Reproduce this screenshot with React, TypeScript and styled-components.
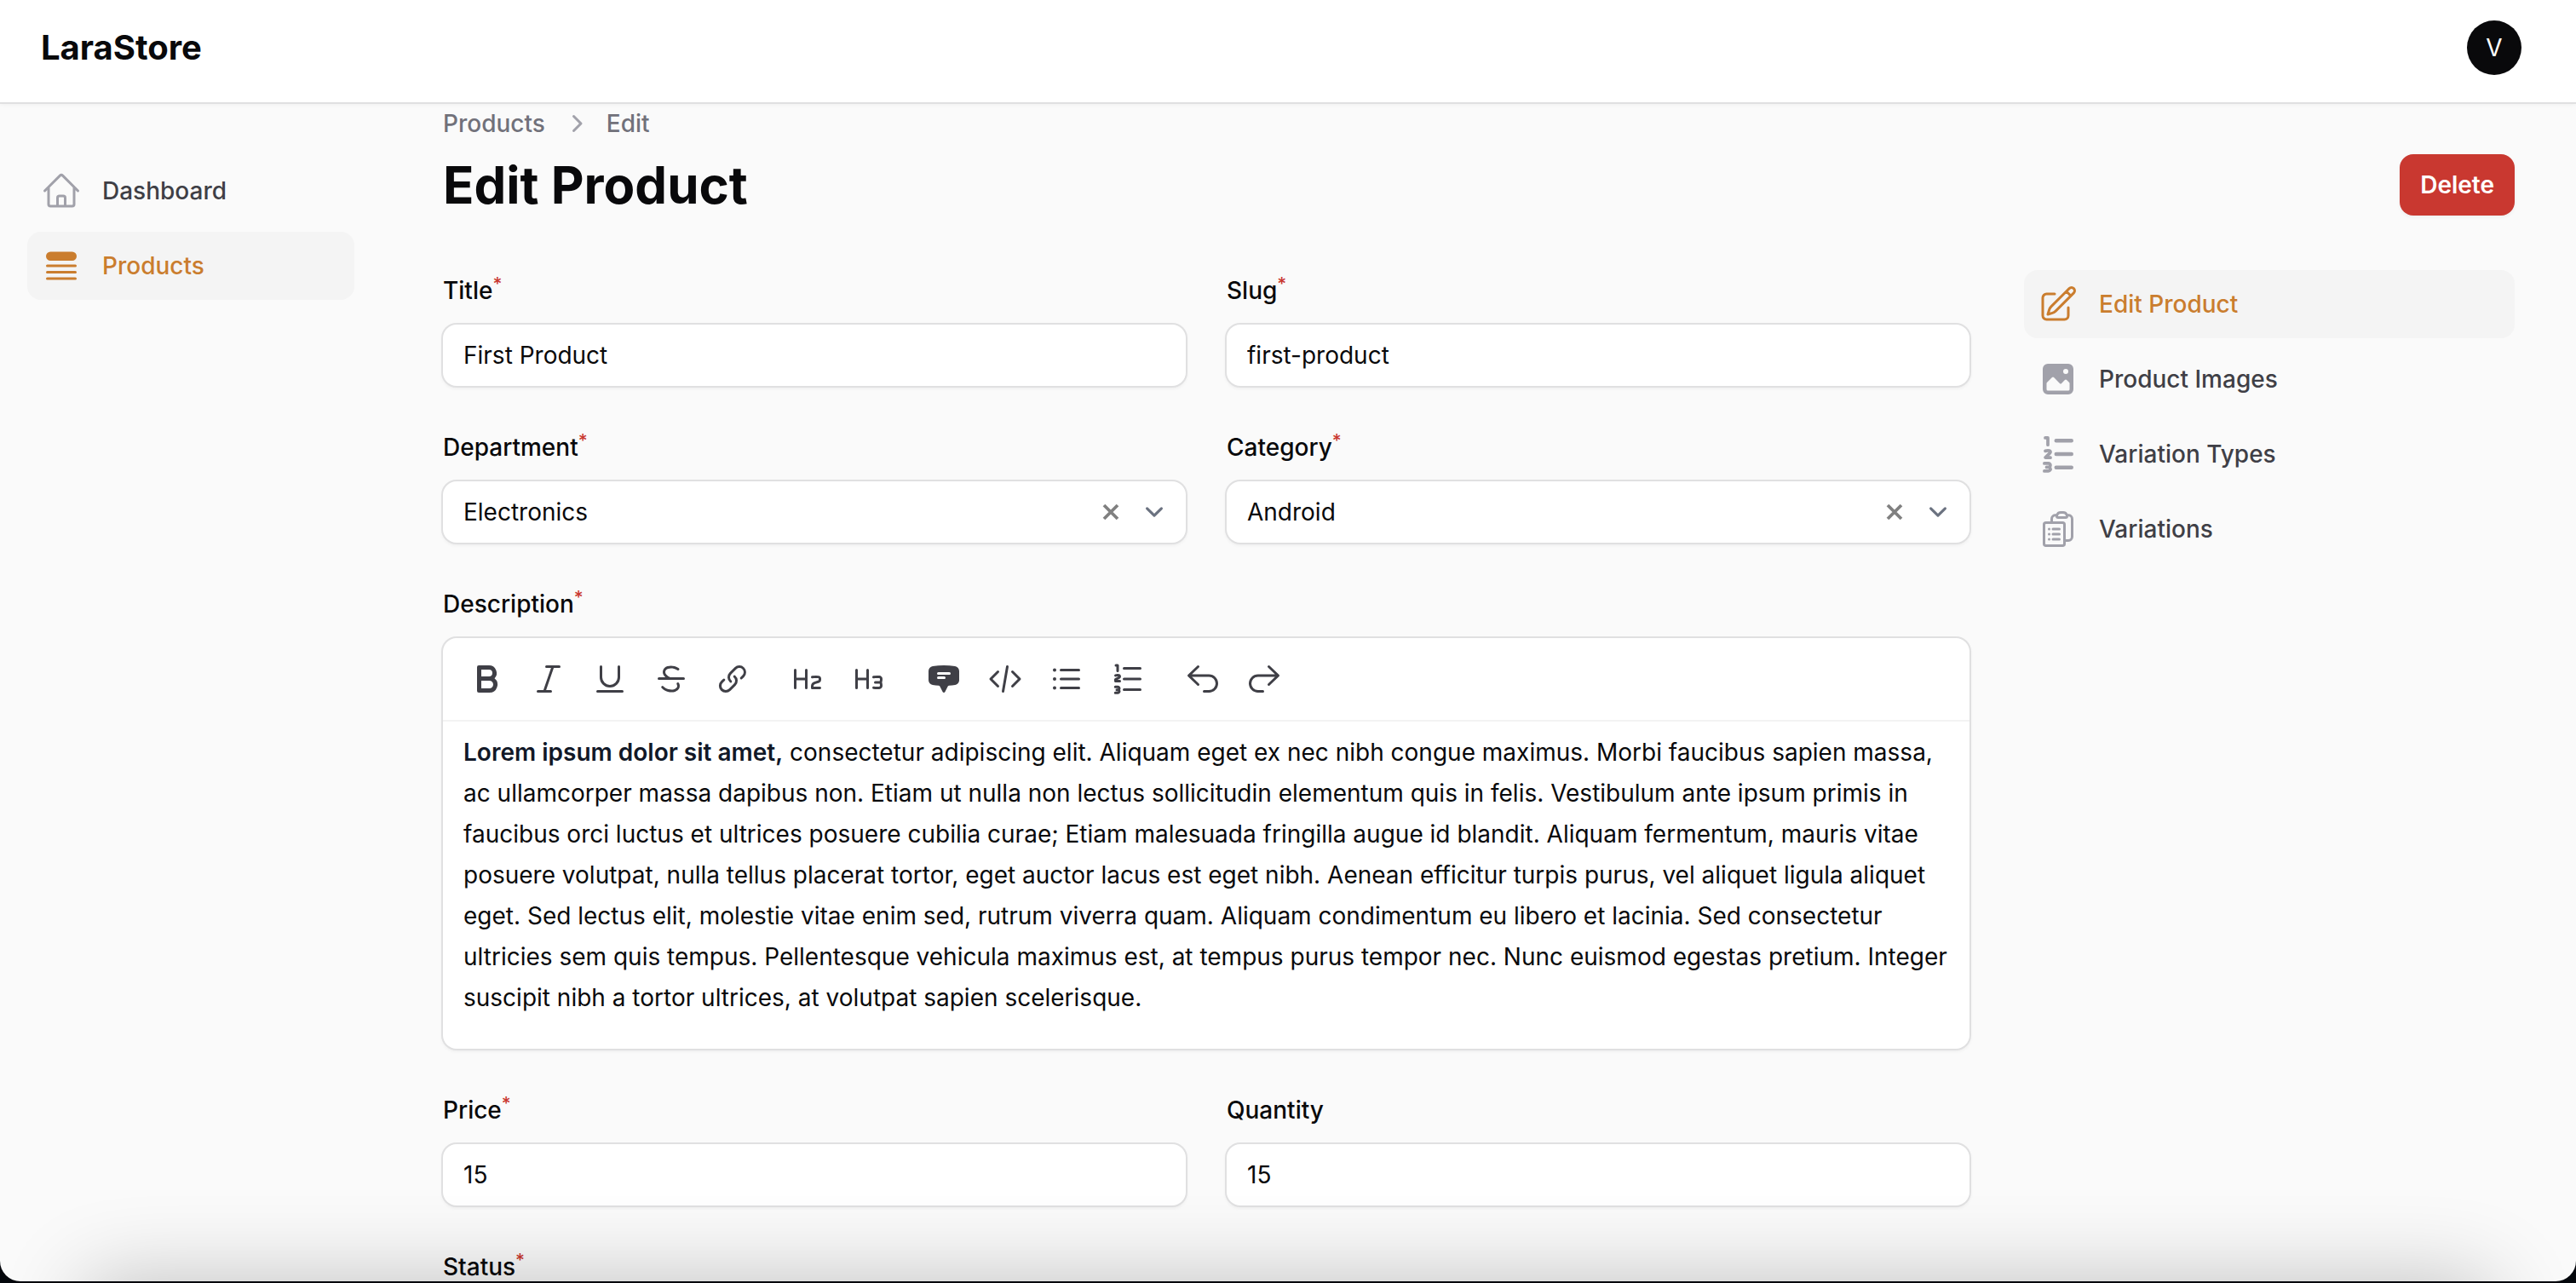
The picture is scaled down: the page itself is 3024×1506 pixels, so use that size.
import React from "react";
import styled, { createGlobalStyle, css } from "styled-components";
import {
  HiOutlineHome,
  HiQueueList,
  HiOutlinePencilSquare,
  HiOutlineClipboardDocumentList,
  HiMiniLink,
  HiMiniCodeBracket,
  HiMiniListBullet,
  HiMiniArrowUturnLeft,
  HiMiniArrowUturnRight,
  HiMiniChatBubbleBottomCenterText,
  HiMiniChevronRight,
} from "react-icons/hi2";

const color = {
  page: "#fafafa",
  surface: "#ffffff",
  ring: "#e0e0e1",
  active: "#f4f4f4",
  ink: "#09090b",
  text: "#3f3f46",
  muted: "#71717a",
  icon: "#a1a1aa",
  primary: "#ca7d2e",
  danger: "#c93830",
};

const GlobalStyle = createGlobalStyle`
  *, *::before, *::after { box-sizing: border-box; }
  body {
    margin: 0;
    background: #04070c;
    color: ${color.ink};
    font-family: Inter, "Liberation Sans", sans-serif;
    font-size: 28px;
    line-height: 40px;
    font-optical-sizing: none;
    -webkit-font-smoothing: antialiased;
  }
  button, input, select { font: inherit; color: inherit; }
  a { color: inherit; text-decoration: none; }
`;

/* ---------- icons ---------- */

const Glyph = ({ size, box, d }: { size: number; box: number; d: string }) => (
  <svg width={size} height={size} viewBox={`0 0 ${box} ${box}`} fill="currentColor" aria-hidden="true">
    <path fillRule="evenodd" clipRule="evenodd" d={d} />
  </svg>
);

const paths = {
  photo:
    "M2 4a2 2 0 0 1 2-2h8a2 2 0 0 1 2 2v8a2 2 0 0 1-2 2H4a2 2 0 0 1-2-2V4Zm10.5 5.707a.5.5 0 0 0-.146-.353l-1-1a.5.5 0 0 0-.708 0L9.354 9.646a.5.5 0 0 1-.708 0L6.354 7.354a.5.5 0 0 0-.708 0l-2 2a.5.5 0 0 0-.146.353V12a.5.5 0 0 0 .5.5h8a.5.5 0 0 0 .5-.5V9.707ZM12 5a1 1 0 1 1-2 0 1 1 0 0 1 2 0Z",
  numberedSmall:
    "M2.995 1a.625.625 0 1 0 0 1.25h.38v2.125a.625.625 0 1 0 1.25 0v-2.75A.625.625 0 0 0 4 1H2.995ZM3.208 7.385a2.37 2.37 0 0 1 1.027-.124L2.573 8.923a.625.625 0 0 0 .439 1.067l1.987.011a.625.625 0 0 0 .006-1.25l-.49-.003.777-.776c.215-.215.335-.506.335-.809 0-.465-.297-.957-.842-1.078a3.636 3.636 0 0 0-1.993.121.625.625 0 1 0 .416 1.179ZM2.625 11a.625.625 0 1 0 0 1.25H4.25a.125.125 0 0 1 0 .25H3.5a.625.625 0 1 0 0 1.25h.75a.125.125 0 0 1 0 .25H2.625a.625.625 0 1 0 0 1.25H4.25a1.375 1.375 0 0 0 1.153-2.125A1.375 1.375 0 0 0 4.25 11H2.625ZM7.25 2a.75.75 0 0 0 0 1.5h6a.75.75 0 0 0 0-1.5h-6ZM7.25 7.25a.75.75 0 0 0 0 1.5h6a.75.75 0 0 0 0-1.5h-6ZM6.5 13.25a.75.75 0 0 1 .75-.75h6a.75.75 0 0 1 0 1.5h-6a.75.75 0 0 1-.75-.75Z",
  bold: "M4 3a1 1 0 0 1 1-1h6a4.5 4.5 0 0 1 3.274 7.587A4.75 4.75 0 0 1 11.25 18H5a1 1 0 0 1-1-1V3Zm2.5 5.5v-4H11a2 2 0 1 1 0 4H6.5Zm0 2.5v4.5h4.75a2.25 2.25 0 0 0 0-4.5H6.5Z",
  italic:
    "M8 2.75A.75.75 0 0 1 8.75 2h7.5a.75.75 0 0 1 0 1.5h-3.215l-4.483 13h2.698a.75.75 0 0 1 0 1.5h-7.5a.75.75 0 0 1 0-1.5h3.215l4.483-13H8.75A.75.75 0 0 1 8 2.75Z",
  underline:
    "M4.75 2a.75.75 0 0 1 .75.75V9a4.5 4.5 0 1 0 9 0V2.75a.75.75 0 0 1 1.5 0V9A6 6 0 0 1 4 9V2.75A.75.75 0 0 1 4.75 2ZM2 17.25a.75.75 0 0 1 .75-.75h14.5a.75.75 0 0 1 0 1.5H2.75a.75.75 0 0 1-.75-.75Z",
  strike:
    "M11.617 3.963c-1.186-.318-2.418-.323-3.416.015-.992.336-1.49.91-1.642 1.476-.152.566-.007 1.313.684 2.1.528.6 1.273 1.1 2.128 1.446h7.879a.75.75 0 0 1 0 1.5H2.75a.75.75 0 0 1 0-1.5h3.813a5.976 5.976 0 0 1-.447-.456C5.18 7.479 4.798 6.231 5.11 5.066c.312-1.164 1.268-2.055 2.61-2.509 1.336-.451 2.877-.42 4.286-.043.856.23 1.684.592 2.409 1.074a.75.75 0 1 1-.83 1.25 6.723 6.723 0 0 0-1.968-.875Zm1.909 8.123a.75.75 0 0 1 1.015.309c.53.99.607 2.062.18 3.01-.421.94-1.289 1.648-2.441 2.038-1.336.452-2.877.42-4.286.043-1.409-.377-2.759-1.121-3.69-2.18a.75.75 0 1 1 1.127-.99c.696.791 1.765 1.403 2.952 1.721 1.186.318 2.418.323 3.416-.015.853-.288 1.34-.756 1.555-1.232.21-.467.205-1.049-.136-1.69a.75.75 0 0 1 .308-1.014Z",
  heading2:
    "M2.75 4a.75.75 0 0 1 .75.75v4.5h5v-4.5a.75.75 0 0 1 1.5 0v10.5a.75.75 0 0 1-1.5 0v-4.5h-5v4.5a.75.75 0 0 1-1.5 0V4.75A.75.75 0 0 1 2.75 4ZM15 9.5c-.729 0-1.445.051-2.146.15a.75.75 0 0 1-.208-1.486 16.887 16.887 0 0 1 3.824-.1c.855.074 1.512.78 1.527 1.637a17.476 17.476 0 0 1-.009.931 1.713 1.713 0 0 1-1.18 1.556l-2.453.818a1.25 1.25 0 0 0-.855 1.185v.309h3.75a.75.75 0 0 1 0 1.5h-4.5a.75.75 0 0 1-.75-.75v-1.059a2.75 2.75 0 0 1 1.88-2.608l2.454-.818c.102-.034.153-.117.155-.188a15.556 15.556 0 0 0 .009-.85.171.171 0 0 0-.158-.169A15.458 15.458 0 0 0 15 9.5Z",
  heading3:
    "M2.75 4a.75.75 0 0 1 .75.75v4.5h5v-4.5a.75.75 0 0 1 1.5 0v10.5a.75.75 0 0 1-1.5 0v-4.5h-5v4.5a.75.75 0 0 1-1.5 0V4.75A.75.75 0 0 1 2.75 4ZM15 9.5c-.73 0-1.448.051-2.15.15a.75.75 0 1 1-.209-1.485 16.886 16.886 0 0 1 3.476-.128c.985.065 1.878.837 1.883 1.932V10a6.75 6.75 0 0 1-.301 2A6.75 6.75 0 0 1 18 14v.031c-.005 1.095-.898 1.867-1.883 1.932a17.018 17.018 0 0 1-3.467-.127.75.75 0 0 1 .209-1.485 15.377 15.377 0 0 0 3.16.115c.308-.02.48-.24.48-.441L16.5 14c0-.431-.052-.85-.15-1.25h-2.6a.75.75 0 0 1 0-1.5h2.6c.098-.4.15-.818.15-1.25v-.024c-.001-.201-.173-.422-.481-.443A15.485 15.485 0 0 0 15 9.5Z",
  numbered:
    "M3 1.25a.75.75 0 0 0 0 1.5h.25v2.5a.75.75 0 0 0 1.5 0V2A.75.75 0 0 0 4 1.25H3ZM2.97 8.654a3.5 3.5 0 0 1 1.524-.12.034.034 0 0 1-.012.012L2.415 9.579A.75.75 0 0 0 2 10.25v1c0 .414.336.75.75.75h2.5a.75.75 0 0 0 0-1.5H3.927l1.225-.613c.52-.26.848-.79.848-1.371 0-.647-.429-1.327-1.193-1.451a5.03 5.03 0 0 0-2.277.155.75.75 0 0 0 .44 1.434ZM7.75 3a.75.75 0 0 0 0 1.5h9.5a.75.75 0 0 0 0-1.5h-9.5ZM7.75 9.25a.75.75 0 0 0 0 1.5h9.5a.75.75 0 0 0 0-1.5h-9.5ZM7.75 15.5a.75.75 0 0 0 0 1.5h9.5a.75.75 0 0 0 0-1.5h-9.5ZM2.625 13.875a.75.75 0 0 0 0 1.5h1.5a.125.125 0 0 1 0 .25H3.5a.75.75 0 0 0 0 1.5h.625a.125.125 0 0 1 0 .25h-1.5a.75.75 0 0 0 0 1.5h1.5a1.625 1.625 0 0 0 1.37-2.5 1.625 1.625 0 0 0-1.37-2.5h-1.5Z",
};

const CrossIcon = () => (
  <svg width="20" height="20" viewBox="0 0 20 20" fill="none" stroke="currentColor" strokeWidth="3.8" aria-hidden="true">
    <path d="M2 2l16 16M18 2L2 18" />
  </svg>
);

const ChevronDownIcon = () => (
  <svg width="42" height="42" viewBox="0 0 20 20" fill="none" stroke="currentColor" strokeWidth="1.5" strokeLinecap="round" strokeLinejoin="round" aria-hidden="true">
    <path d="m6 8 4 4 4-4" />
  </svg>
);

/* ---------- frame ---------- */

const Window = styled.div`
  position: relative;
  display: flex;
  flex-direction: column;
  height: calc(100vh - 2px);
  overflow: hidden;
  border-radius: 0 0 24px 24px;
  background: ${color.page};
`;

const BottomShade = styled.div`
  position: absolute;
  top: 100%;
  left: 100px;
  right: 100px;
  height: 200px;
  box-shadow: 0 0 100px rgba(0, 0, 0, 0.24);
  pointer-events: none;
`;

const TopBar = styled.header`
  flex: none;
  display: flex;
  align-items: center;
  justify-content: space-between;
  padding: 24px 64px 32px 48px;
  background: ${color.surface};
  box-shadow: 0 0 0 2px ${color.ring}, 0 2px 6px rgba(0, 0, 0, 0.06);
  z-index: 1;
`;

const Brand = styled.a`
  font-size: 40px;
  line-height: 40px;
  font-weight: 700;
`;

const Avatar = styled.button`
  width: 64px;
  height: 64px;
  padding: 0;
  border: 0;
  border-radius: 50%;
  background: ${color.ink};
  color: #fff;
`;

const Body = styled.div`
  flex: 1;
  min-height: 0;
  display: grid;
  grid-template-columns: 448px minmax(0, 1fr);
  overflow-y: auto;
  scrollbar-width: none;
`;

/* ---------- navigation ---------- */

const NavList = styled.nav`
  display: flex;
  flex-direction: column;
  gap: 8px;
`;

const Sidebar = styled(NavList)`
  padding: 64px 32px;
`;

const SubNav = styled(NavList)`
  flex: none;
  width: 576px;
`;

const NavLink = styled.a<{ $active?: boolean }>`
  display: flex;
  align-items: center;
  gap: 24px;
  padding: 16px;
  border-radius: 16px;
  font-weight: 500;
  color: ${color.text};

  svg {
    flex: none;
    width: 48px;
    height: 48px;
    color: ${color.icon};
  }

  ${(p) =>
    p.$active &&
    css`
      background: ${color.active};
      color: ${color.primary};
      svg { color: ${color.primary}; }
    `}
`;

/* ---------- page ---------- */

const Main = styled.main`
  width: 100%;
  max-width: 2560px;
  margin: 0 auto;
  padding: 5px 64px 0;
  display: flex;
  flex-direction: column;
  gap: 64px;
`;

const PageHeader = styled.header`
  display: flex;
  align-items: flex-end;
  justify-content: space-between;
`;

const PageIntro = styled.div`
  display: flex;
  flex-direction: column;
  gap: 16px;
`;

const Breadcrumbs = styled.nav`
  display: flex;
  align-items: center;
  gap: 16px;
  font-weight: 500;
  color: ${color.muted};

  svg {
    width: 40px;
    height: 40px;
    color: ${color.icon};
  }
`;

const PageTitle = styled.h1`
  margin: 0;
  font-size: 60px;
  line-height: 72px;
  font-weight: 700;
`;

const DeleteButton = styled.button`
  padding: 16px 24px;
  border: 0;
  border-radius: 16px;
  background: ${color.danger};
  color: #fff;
  font-weight: 600;
  box-shadow: 0 2px 4px rgba(0, 0, 0, 0.05);
`;

const Columns = styled.div`
  display: flex;
  align-items: flex-start;
  gap: 64px;
`;

const Form = styled.form`
  flex: 1;
  min-width: 0;
  display: grid;
  grid-template-columns: repeat(2, minmax(0, 1fr));
  gap: 48px;
`;

const FieldBox = styled.div<{ $wide?: boolean }>`
  display: flex;
  flex-direction: column;
  align-items: stretch;
  gap: 16px;
  grid-column: ${(p) => (p.$wide ? "1 / -1" : "auto")};
`;

const labelText = css`
  font-weight: 500;
  line-height: 48px;
`;

const Label = styled.label`
  ${labelText}
`;

const LabelText = styled.span`
  ${labelText}
`;

const Required = styled.sup`
  font-size: 21px;
  line-height: 0;
  color: ${color.danger};
`;

const Control = styled.div`
  display: flex;
  align-items: center;
  border-radius: 16px;
  background: ${color.surface};
  box-shadow: 0 0 0 2px ${color.ring}, 0 2px 4px 1px rgba(0, 0, 0, 0.06);
`;

const fieldInput = css`
  flex: 1;
  min-width: 0;
  height: 72px;
  margin: 0;
  padding: 12px 24px;
  border: 0;
  outline: 0;
  background: transparent;
  line-height: 48px;
  appearance: none;
`;

const Input = styled.input`
  ${fieldInput}
`;

const Select = styled.select`
  ${fieldInput}
`;

const SelectTools = styled.div`
  display: flex;
  align-items: center;
  gap: 20px;
  padding-right: 16px;
  color: #6b7280;
`;

const ClearButton = styled.button`
  display: flex;
  padding: 0;
  border: 0;
  background: none;
  color: #808080;
`;

const Editor = styled.div`
  border-radius: 16px;
  background: ${color.surface};
  box-shadow: 0 0 0 2px ${color.ring}, 0 2px 4px 1px rgba(0, 0, 0, 0.06);
`;

const Toolbar = styled.div`
  display: flex;
  gap: 24px;
  padding: 16px 20px;
  border-bottom: 2px solid #f3f3f3;
`;

const ToolGroup = styled.div`
  display: flex;
  gap: 8px;
`;

const ToolButton = styled.button`
  display: flex;
  align-items: center;
  justify-content: center;
  width: 64px;
  height: 64px;
  padding: 0;
  border: 0;
  border-radius: 16px;
  background: none;
  color: ${color.text};

  svg {
    width: 40px;
    height: 40px;
  }
`;

const EditorText = styled.div`
  min-height: 384px;
  padding: 12px 24px;
  line-height: 48px;
  outline: 0;

  strong {
    font-weight: 600;
    color: #111827;
  }
`;

/* ---------- pieces ---------- */

const tools: { name: string; icon: React.ReactNode }[][] = [
  [
    { name: "Bold", icon: <Glyph size={40} box={20} d={paths.bold} /> },
    { name: "Italic", icon: <Glyph size={40} box={20} d={paths.italic} /> },
    { name: "Underline", icon: <Glyph size={40} box={20} d={paths.underline} /> },
    { name: "Strikethrough", icon: <Glyph size={40} box={20} d={paths.strike} /> },
    { name: "Link", icon: <HiMiniLink /> },
  ],
  [
    { name: "Heading", icon: <Glyph size={40} box={20} d={paths.heading2} /> },
    { name: "Subheading", icon: <Glyph size={40} box={20} d={paths.heading3} /> },
  ],
  [
    { name: "Blockquote", icon: <HiMiniChatBubbleBottomCenterText /> },
    { name: "Code block", icon: <HiMiniCodeBracket /> },
    { name: "Bullets", icon: <HiMiniListBullet /> },
    { name: "Numbers", icon: <Glyph size={40} box={20} d={paths.numbered} /> },
  ],
  [
    { name: "Undo", icon: <HiMiniArrowUturnLeft /> },
    { name: "Redo", icon: <HiMiniArrowUturnRight /> },
  ],
];

type FieldProps = { id: string; label: string; value?: string; required?: boolean };

const TextField = ({ id, label, value, required, type = "text" }: FieldProps & { type?: string }) => (
  <FieldBox>
    <Label htmlFor={id}>
      {label}
      {required && <Required>*</Required>}
    </Label>
    <Control>
      <Input id={id} type={type} defaultValue={value} required={required} />
    </Control>
  </FieldBox>
);

const SelectField = ({ id, label, value, required }: FieldProps) => (
  <FieldBox>
    <Label htmlFor={id}>
      {label}
      {required && <Required>*</Required>}
    </Label>
    <Control>
      <Select id={id} required={required}>
        {value && <option>{value}</option>}
      </Select>
      <SelectTools>
        {value && (
          <ClearButton type="button" aria-label={`Clear ${label}`}>
            <CrossIcon />
          </ClearButton>
        )}
        <ChevronDownIcon />
      </SelectTools>
    </Control>
  </FieldBox>
);

export default function App() {
  return (
    <>
      <GlobalStyle />
      <Window>
        <TopBar>
          <Brand href="#">LaraStore</Brand>
          <Avatar type="button">V</Avatar>
        </TopBar>
        <Body>
          <Sidebar aria-label="Main">
            <NavLink href="#">
              <HiOutlineHome />
              Dashboard
            </NavLink>
            <NavLink href="#" $active>
              <HiQueueList />
              Products
            </NavLink>
          </Sidebar>
          <Main>
            <PageHeader>
              <PageIntro>
                <Breadcrumbs aria-label="Breadcrumb">
                  <a href="#">Products</a>
                  <HiMiniChevronRight />
                  <a href="#">Edit</a>
                </Breadcrumbs>
                <PageTitle>Edit Product</PageTitle>
              </PageIntro>
              <DeleteButton type="button">Delete</DeleteButton>
            </PageHeader>
            <Columns>
              <Form>
                <TextField id="title" label="Title" value="First Product" required />
                <TextField id="slug" label="Slug" value="first-product" required />
                <SelectField id="department" label="Department" value="Electronics" required />
                <SelectField id="category" label="Category" value="Android" required />
                <FieldBox $wide>
                  <LabelText id="description-label">
                    Description
                    <Required>*</Required>
                  </LabelText>
                  <Editor>
                    <Toolbar role="toolbar" aria-label="Formatting">
                      {tools.map((group, i) => (
                        <ToolGroup key={i}>
                          {group.map((tool) => (
                            <ToolButton key={tool.name} type="button" aria-label={tool.name}>
                              {tool.icon}
                            </ToolButton>
                          ))}
                        </ToolGroup>
                      ))}
                    </Toolbar>
                    <EditorText
                      role="textbox"
                      aria-multiline="true"
                      aria-labelledby="description-label"
                      contentEditable
                      suppressContentEditableWarning
                      spellCheck={false}
                    >
                      <strong>Lorem ipsum dolor sit amet,</strong> consectetur adipiscing elit. Aliquam eget ex nec nibh
                      congue maximus. Morbi faucibus sapien massa, ac ullamcorper massa dapibus non. Etiam ut nulla non
                      lectus sollicitudin elementum quis in felis. Vestibulum ante ipsum primis in faucibus orci luctus
                      et ultrices posuere cubilia curae; Etiam malesuada fringilla augue id blandit. Aliquam fermentum,
                      mauris vitae posuere volutpat, nulla tellus placerat tortor, eget auctor lacus est eget nibh.
                      Aenean efficitur turpis purus, vel aliquet ligula aliquet eget. Sed lectus elit, molestie vitae
                      enim sed, rutrum viverra quam. Aliquam condimentum eu libero et lacinia. Sed consectetur ultricies
                      sem quis tempus. Pellentesque vehicula maximus est, at tempus purus tempor nec. Nunc euismod
                      egestas pretium. Integer suscipit nibh a tortor ultrices, at volutpat sapien scelerisque.
                    </EditorText>
                  </Editor>
                </FieldBox>
                <TextField id="price" label="Price" value="15" type="number" required />
                <TextField id="quantity" label="Quantity" value="15" type="number" />
                <SelectField id="status" label="Status" required />
              </Form>
              <SubNav aria-label="Product">
                <NavLink href="#" $active>
                  <HiOutlinePencilSquare />
                  Edit Product
                </NavLink>
                <NavLink href="#">
                  <Glyph size={48} box={16} d={paths.photo} />
                  Product Images
                </NavLink>
                <NavLink href="#">
                  <Glyph size={48} box={16} d={paths.numberedSmall} />
                  Variation Types
                </NavLink>
                <NavLink href="#">
                  <HiOutlineClipboardDocumentList />
                  Variations
                </NavLink>
              </SubNav>
            </Columns>
          </Main>
        </Body>
        <BottomShade />
      </Window>
    </>
  );
}
